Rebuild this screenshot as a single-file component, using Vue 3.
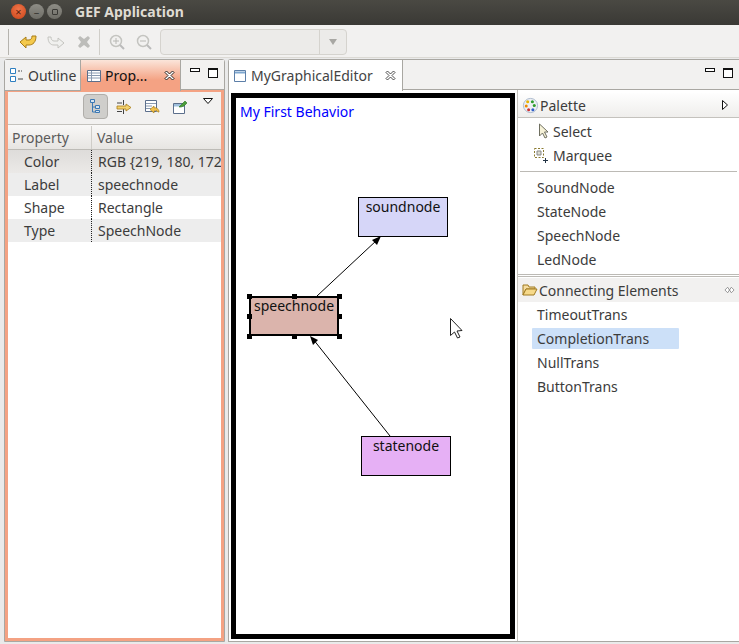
<script setup>
const rows = [
  { k: 'Color', v: 'RGB {219, 180, 172', cls: 'sel' },
  { k: 'Label', v: 'speechnode', cls: 'alt' },
  { k: 'Shape', v: 'Rectangle', cls: '' },
  { k: 'Type', v: 'SpeechNode', cls: 'alt' }
]
const nodes = ['SoundNode', 'StateNode', 'SpeechNode', 'LedNode']
const trans = ['TimeoutTrans', 'CompletionTrans', 'NullTrans', 'ButtonTrans']
const handles = [
  [-4, -4], [41, -4], [86, -4], [-4, 16], [86, 16], [-4, 36], [41, 36], [86, 36]
]
</script>

<template>
  <div class="win">
    <header class="title">
      <span class="dot close">×</span>
      <span class="dot min">–</span>
      <span class="dot max"><i></i></span>
      <span class="title-text">GEF Application</span>
    </header>

    <div class="toolbar">
      <span class="grip"></span>
      <svg class="ti" viewBox="0 0 18 18"><path d="M1 9l6-5v3h3c2 0 3-2 3-4h4c0 6-3 9-7 9H7l0 3z" fill="#f4c94c" stroke="#a87c16"/></svg>
      <svg class="ti" viewBox="0 0 18 18"><path d="M17 10l-6-5v3H7C5 8 4 6 4 4H1c0 5 2 8 6 8h4v3z" fill="#f0f0ee" stroke="#c4c4c0"/></svg>
      <svg class="ti" viewBox="0 0 18 18"><path d="M3 5l2-2 4 3 4-3 2 2-3 4 3 4-2 2-4-3-4 3-2-2 3-4z" fill="#bdbdba"/></svg>
      <span class="sep"></span>
      <svg class="ti zi" viewBox="0 0 18 18"><circle cx="8" cy="8" r="5.5" fill="none" stroke="#c4c4c0" stroke-width="1.5"/><path d="M5 8h6M8 5v6" stroke="#b8b8b4"/><path d="M12 12l4 4" stroke="#bbb" stroke-width="2"/></svg>
      <svg class="ti zi" viewBox="0 0 18 18"><circle cx="8" cy="8" r="5.5" fill="none" stroke="#c4c4c0" stroke-width="1.5"/><path d="M5 8h6" stroke="#b8b8b4"/><path d="M12 12l4 4" stroke="#bbb" stroke-width="2"/></svg>
      <div class="combo"><span class="combo-btn"><i></i></span></div>
    </div>

    <main class="main">
      <section class="left">
        <div class="tabs">
          <div class="tab outline">
            <svg class="tabicon" viewBox="0 0 16 16"><path d="M1.500 1.500h5v5h-5zM1.500 9.500h5v5h-5z" fill="#fff" stroke="#2e7fc0"/><path d="M9 4h2M12 4h1M9 12h5" stroke="#444"/></svg>
            <span>Outline</span>
          </div>
          <div class="tab active">
            <svg class="tabicon" viewBox="0 0 16 16"><path d="M1.500 2.500h13v11h-13z" fill="#fff" stroke="#5c6f8c"/><path d="M2 5h12M2 7.500h12M2 10h12M5.500 3v10" stroke="#8a9ab0"/></svg>
            <span class="strong">Prop...</span>
            <svg class="x" viewBox="0 0 11 11"><path d="M1 2.500L2.500 1 5.500 4 8.500 1 10 2.500 7 5.500 10 8.500 8.500 10 5.500 7 2.500 10 1 8.500 4 5.500z" fill="#fff" stroke="#111" stroke-width=".9"/></svg>
          </div>
          <div class="winbtns"><i class="mn"></i><i class="mx"></i></div>
        </div>
        <div class="prop">
          <div class="prop-tools">
            <span class="pressed">
              <svg class="pi" viewBox="0 0 16 16"><path d="M2.500 1.500h4v3h-4zM7.500 7.500h4v3h-4zM7.500 12.500h4v2h-4z" fill="#d5e3ef" stroke="#3b78b4"/><path d="M4.500 5v9h3M4.500 9h3" fill="none" stroke="#3b78b4"/></svg>
            </span>
            <svg class="pi t2" viewBox="0 0 16 16"><path d="M1 4h5M1 12.500h5M7.500 1v5M7.500 10v5" stroke="#444"/><path d="M1 7h9V5l5 3.500L10 12v-2H1z" fill="#f3d26f" stroke="#a87c16" stroke-width=".8"/></svg>
            <svg class="pi t3" viewBox="0 0 16 16"><path d="M1.500 1.500h11v11h-11z" fill="#fff" stroke="#5c6f8c"/><path d="M2 4.500h10M2 7h6M2 9.500h5" stroke="#8a9ab0"/><path d="M15 13c0-3-3-5-5-4V7l-4 3.500 4 3.500v-2c2-1 3 0 4 1z" fill="#f3c14b" stroke="#a87c16" stroke-width=".7"/></svg>
            <svg class="pi t4" viewBox="0 0 16 16"><path d="M1.500 4.500h11v10h-11z" fill="#fff" stroke="#5c6f8c"/><path d="M2 5h10v2.500H2z" fill="#9fc0dc"/><path d="M7 8l3-3 3-3 2 2-3 3-3 1z" fill="#4b9e3a" stroke="#2a7020" stroke-width=".6"/></svg>
            <svg class="menu-tri" viewBox="0 0 10 6"><path d="M.5.500h9L5 5.500z" fill="#fff" stroke="#111"/></svg>
          </div>
          <div class="thead">
            <span class="c1">Property</span>
            <span class="c2">Value</span>
          </div>
          <div v-for="r in rows" :key="r.k" class="trow" :class="r.cls">
            <span class="c1 key">{{ r.k }}</span>
            <span class="c2 val">{{ r.v }}</span>
          </div>
        </div>
      </section>

      <section class="right">
        <div class="tabs etabs">
          <div class="tab etab">
            <svg class="tabicon" viewBox="0 0 16 16"><path d="M2.500 2.500h11v11h-11z" fill="#fff" stroke="#5c7fa8"/><path d="M3 3.500h10v2H3z" fill="#7ea7cf"/></svg>
            <span>MyGraphicalEditor</span>
            <svg class="x" viewBox="0 0 11 11"><path d="M1 2.500L2.500 1 5.500 4 8.500 1 10 2.500 7 5.500 10 8.500 8.500 10 5.500 7 2.500 10 1 8.500 4 5.500z" fill="#fff" stroke="#222" stroke-width=".8"/></svg>
          </div>
          <div class="winbtns"><i class="mn"></i><i class="mx"></i></div>
        </div>
        <div class="ebody">
          <div class="canvas">
            <span class="behav">My First Behavior</span>
            <svg class="wires" width="284" height="546" viewBox="231 93 284 546">
              <path d="M317 296L377 240" stroke="#000" stroke-width="1" fill="none"/>
              <path d="M381 236l-4 9-5-5z" fill="#000"/>
              <path d="M390 436L313 339" stroke="#000" stroke-width="1" fill="none"/>
              <path d="M310 336l8 4-5 5z" fill="#000"/>
              <path d="M450.500 318.500v17l4-3.500 3 6 2.500-1-3-6 5-.500z" fill="#fff" stroke="#222"/>
            </svg>
            <div class="node sound">soundnode</div>
            <div class="node speech">
              speechnode
              <i v-for="(h, i) in handles" :key="i" class="h" :style="{ left: h[0] + 'px', top: h[1] + 'px' }"></i>
            </div>
            <div class="node state">statenode</div>
          </div>
          <aside class="palette">
            <div class="pal-head">
              <svg class="pal-ico" viewBox="0 0 18 18"><circle cx="9" cy="9" r="7.500" fill="#eef0f4" stroke="#a9b8cc"/><circle cx="6" cy="5" r="1.600" fill="#e8b400"/><circle cx="11" cy="5" r="1.600" fill="#2e9d2e"/><circle cx="4.500" cy="9.500" r="1.600" fill="#f08a00"/><circle cx="13" cy="9" r="1.600" fill="#2e9d2e"/><circle cx="7" cy="13.500" r="1.600" fill="#d03030"/><circle cx="11.500" cy="13.500" r="1.600" fill="#2f5fc8"/></svg>
              <span>Palette</span>
              <svg class="pal-arrow" viewBox="0 0 8 12"><path d="M1.500 1.500l5 4.500-5 4.500z" fill="#fff" stroke="#111"/></svg>
            </div>
            <div class="tool"><svg class="tool-ico" viewBox="0 0 14 16"><path d="M3.500 1v12l3-3 2.500 5 2-1-2.500-5H12z" fill="#f6f2d8" stroke="#6f6f60"/></svg><span>Select</span></div>
            <div class="tool"><svg class="tool-ico mq" viewBox="0 0 16 16"><path d="M1.500 1.500h9v9h-9z" fill="none" stroke="#8a7a30" stroke-dasharray="2 1.500"/><path d="M4 4h4v4H4z" fill="#dcdcd0" stroke="#888"/><path d="M10 13.500h5M12.500 11v5" stroke="#234"/></svg><span>Marquee</span></div>
            <div class="rule"></div>
            <div v-for="n in nodes" :key="n" class="item"><span>{{ n }}</span></div>
            <div class="rule double"></div>
            <div class="drawer">
              <svg class="folder" viewBox="0 0 16 14"><path d="M1 12V2h5l1 2h6v2H4z" fill="#f5dca0" stroke="#a07a20"/><path d="M1 12l3-6h11l-3 6z" fill="#f6d98a" stroke="#a07a20"/></svg>
              <span>Connecting Elements</span>
              <svg class="pin" viewBox="0 0 12 8"><path d="M1 4l3-3 2 3-2 3zM11 4L8 1 6 4l2 3z" fill="#fff" stroke="#777" stroke-width=".8"/></svg>
            </div>
            <div v-for="t in trans" :key="t" class="item" :class="{ hot: t === 'CompletionTrans' }"><span>{{ t }}</span></div>
          </aside>
        </div>
      </section>
    </main>
  </div>
</template>

<style scoped>
.win { width: 739px; height: 644px; display: flex; flex-direction: column; background: #ededed; overflow: hidden; font-family: "Noto Sans", "Open Sans", sans-serif; font-size: 14px; color: #3c3c3c; }
.title { height: 25px; flex: none; box-sizing: border-box; padding-bottom: 2px; display: flex; align-items: center; background: linear-gradient(#4a4943, #3a3935); color: #dfdbd2; }
.dot { width: 15px; height: 15px; border-radius: 50%; margin-right: 3px; display: flex; align-items: center; justify-content: center; font-size: 11px; line-height: 1; color: #3a3935; background: linear-gradient(#8e8d86, #6e6d66); flex: none; }
.dot i { width: 6px; height: 6px; border: 1px solid #3a3935; box-sizing: border-box; border-radius: 1px; }
.close { margin-left: 11px; background: radial-gradient(circle at 50% 35%, #f0754a, #c84317); color: #5a200c; }
.title-text { margin-left: 10px; font-size: 14px; font-weight: 700; }
.toolbar { height: 33px; flex: none; display: flex; align-items: center; background: #f2f1f0; border-bottom: 1px solid #dcdad5; box-sizing: border-box; padding-top: 1px; }
.grip { width: 1px; height: 26px; margin-left: 8px; background: #b5b3ae; }
.ti { width: 18px; height: 18px; margin-left: 10px; flex: none; }
.sep { width: 1px; height: 26px; margin-left: 6px; margin-right: 0; background: #d0cec9; }
.zi { margin-left: 8px; margin-right: 1px; }
.combo { margin-left: 6px; width: 187px; height: 26px; box-sizing: border-box; border: 1px solid #d5d3ce; border-radius: 4px; background: #ecebe9; display: flex; justify-content: flex-end; }
.combo-btn { width: 26px; border-left: 1px solid #d5d3ce; display: flex; align-items: center; justify-content: center; }
.combo-btn i { border: 4px solid transparent; border-top: 6px solid #a8a7a3; border-bottom: 0; }
.main { flex: 1; display: flex; padding: 1px 0 2px 4px; gap: 3px; background: #eaeaea; min-height: 0; }
.left { width: 219px; flex: none; display: flex; flex-direction: column; border: 1px solid #a9a7a2; border-radius: 3px 3px 0 0; box-sizing: content-box; background: #f2f1f0; }
.right { flex: 1; display: flex; flex-direction: column; border: solid #a9a7a2; border-width: 1px 0 1px 1px; border-radius: 3px 0 0 0; background: #fff; min-width: 0; }
.tabs { height: 30px; flex: none; display: flex; background: #f2f1f0; }
.tab { display: flex; align-items: center; height: 31px; box-sizing: border-box; position: relative; z-index: 1; }
.outline { width: 76px; padding-left: 4px; border-right: 1px solid #a9a7a2; border-bottom: 1px solid #a9a7a2; background: #f2f1f0; white-space: nowrap; overflow: hidden; }
.tabicon { width: 16px; height: 16px; margin-right: 3px; flex: none; }
.active { width: 100px; padding-left: 5px; background: linear-gradient(#fbe5da, #f4a283 65%, #f4a283); border-right: 1px solid #a9a7a2; }
.strong { color: #111; width: 56px; white-space: nowrap; }
.x { width: 11px; height: 11px; margin-left: 3px; flex: none; }
.winbtns { flex: 1; display: flex; justify-content: flex-end; gap: 8px; padding: 8px 6px 0 0; border-bottom: 1px solid #a9a7a2; height: 30px; box-sizing: border-box; }
.mn { width: 8px; height: 2px; border: 1px solid #111; background: #fff; display: block; }
.mx { width: 8px; height: 7px; border: 1px solid #111; border-top-width: 2px; background: #fff; display: block; }
.prop { flex: 1; background: #fff; border: 3px solid #f4a283; border-top-width: 2px; min-height: 0; }
.prop-tools { height: 33px; box-sizing: border-box; background: #f2f1f0; border-bottom: 1px solid #c4c2bd; display: flex; align-items: center; padding-left: 75px; position: relative; }
.pressed { width: 25px; height: 25px; margin-top: -4px; box-sizing: border-box; border: 1px solid #b0aeaa; border-radius: 4px; background: #cfcecb; display: flex; align-items: center; justify-content: center; }
.pi { width: 16px; height: 16px; flex: none; }
.t2 { margin-left: 8px; margin-top: -3px; }
.t3 { margin-left: 12px; margin-top: -3px; }
.t4 { margin-left: 12px; margin-top: -3px; }
.menu-tri { position: absolute; left: 195px; top: 6px; width: 10px; height: 6px; }
.thead { height: 25px; display: flex; align-items: center; background: linear-gradient(#f9f8f7, #e7e5e2); border-bottom: 1px solid #bdbbb6; box-sizing: border-box; color: #5b5b5b; padding-top: 1px; }
.c1 { width: 84px; padding-left: 4px; box-sizing: border-box; flex: none; }
.thead .c1 { border-right: 1px solid #cfcdc8; height: 23px; line-height: 23px; }
.c2 { padding-left: 5px; white-space: nowrap; overflow: hidden; flex: 1; }
.trow { height: 23px; display: flex; align-items: center; }
.trow .c1 { height: 23px; line-height: 23px; padding-left: 16px; border-right: 1px dotted #222; }
.trow .c2 { padding-left: 6px; }
.sel { background: linear-gradient(#dedcda, #ebe9e7); }
.alt { background: #ededed; }
.ebody { flex: 1; display: flex; min-height: 0; }
.etabs .etab { width: 174px; padding-left: 3px; background: #fff; border-right: 1px solid #a9a7a2; white-space: nowrap; color: #444; }
.etab .x { margin-left: 12px; }
.canvas { width: 284px; height: 546px; margin: 3px 0 0 2px; box-sizing: border-box; border: 5px solid #000; position: relative; background: #fff; flex: none; }
.behav { position: absolute; left: 4px; top: 4px; color: #0000ff; font-size: 14px; white-space: nowrap; }
.wires { position: absolute; left: -5px; top: -5px; pointer-events: none; }
.node { position: absolute; width: 90px; height: 40px; box-sizing: border-box; border: 1px solid #000; text-align: center; color: #111; line-height: 17px; white-space: nowrap; }
.sound { left: 122px; top: 99px; background: #d6d6f8; }
.speech { left: 13px; top: 198px; background: #dbb4ac; border-width: 2px; line-height: 15px; }
.state { left: 125px; top: 338px; background: #e6b0f5; }
.h { position: absolute; width: 5px; height: 5px; background: #000; }
.palette { flex: 1; margin-left: 2px; border-left: 1px solid #c4c2bd; background: #fff; }
.pal-head { height: 25px; margin: 3px 0 1px; box-sizing: border-box; display: flex; align-items: center; padding: 0 10px 0 4px; background: linear-gradient(#fefefe, #efeeec); border-bottom: 1px solid #c4c2bd; }
.pal-ico { width: 17px; height: 17px; margin-right: 1px; }
.pal-arrow { width: 8px; height: 12px; margin-left: auto; }
.tool { height: 24px; display: flex; align-items: center; padding-left: 17px; }
.tool-ico { width: 16px; height: 16px; margin-right: 2px; flex: none; }
.mq { margin-left: -2px; margin-right: 4px; }
.rule { height: 1px; background: #bcbab5; margin: 4px 2px 3px; }
.double { height: 3px; background: linear-gradient(#bcbab5 33%, #fff 33%, #fff 66%, #bcbab5 66%); margin: 3px 0 1px; }
.item { height: 24px; display: flex; align-items: center; padding-left: 19px; }
.hot { background: #cce0f8; margin-left: 14px; padding-left: 5px; width: 147px; box-sizing: border-box; height: 21px; margin-top: 2px; margin-bottom: 1px; border-radius: 1px; }
.drawer { height: 24px; display: flex; align-items: center; padding: 0 3px 0 4px; background: #f2f1f0; }
.folder { width: 16px; height: 14px; margin-right: 1px; flex: none; }
.pin { width: 11px; height: 8px; margin-left: auto; margin-right: 1px; }
</style>
